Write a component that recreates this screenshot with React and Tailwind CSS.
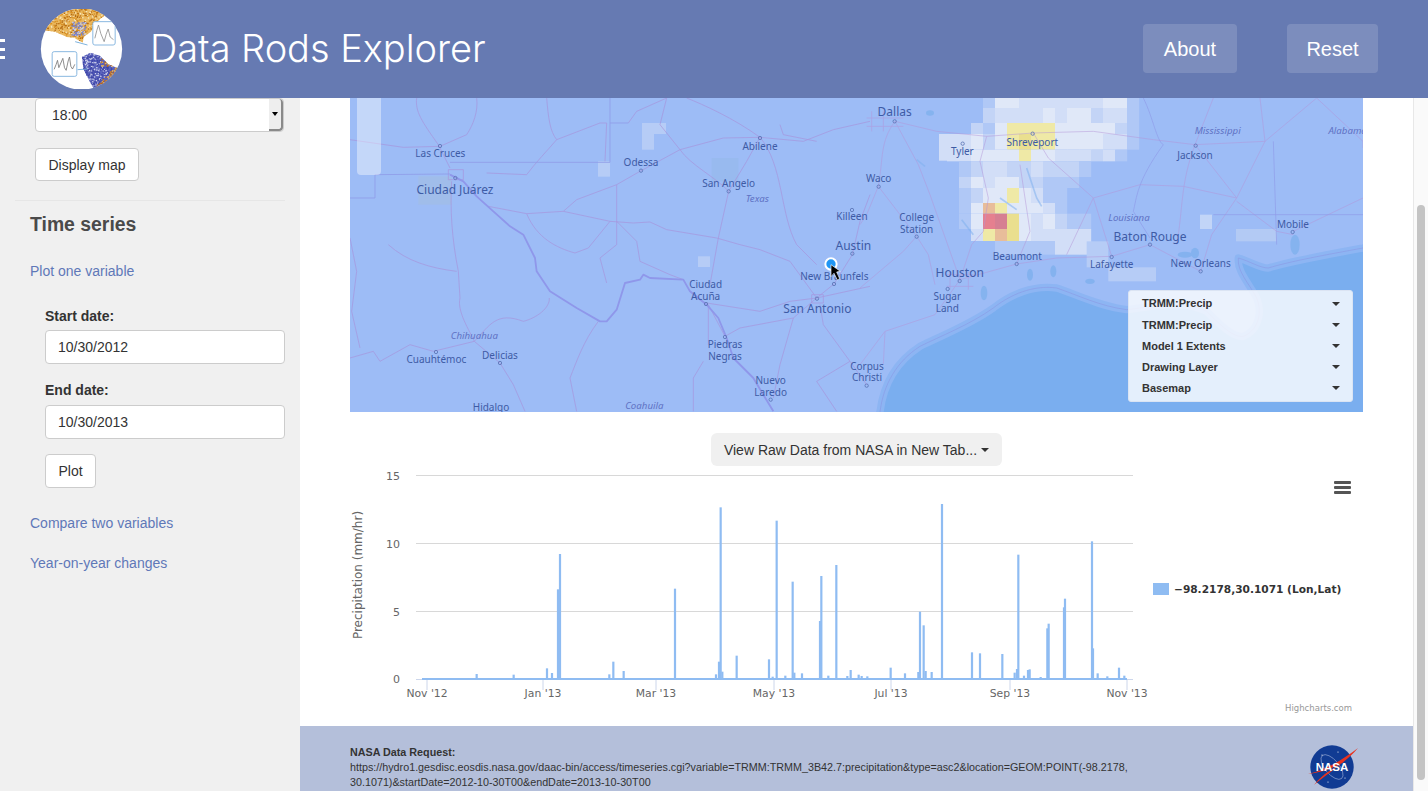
import React from "react";

// traced in 3x crop coordinates, the two groups below scale them back down
const westRoads = [
  "M200,0 C195,40 215,70 265,140 L300,210",
  "M380,0 C385,40 370,80 350,110 L270,145 L160,148 L0,125",
  "M590,0 C595,60 600,100 620,125 L750,75 L770,75 L765,190",
  "M620,125 C590,160 560,190 530,230 L410,225",
  "M835,75 L860,40 L950,0",
  "M950,0 L930,80 L990,155",
  "M990,155 C1020,200 1100,240 1136,280 L1105,420 L1080,560",
  "M1010,0 C1060,20 1150,60 1230,118 L1190,190 L1136,280",
  "M800,260 L800,370 L800,440 L750,480 L770,555",
  "M800,370 L860,430 L870,490 L960,530 L1000,545",
  "M415,325 L530,347 L640,340 L780,370 L850,375 L900,372 L950,395 L1100,420 L1170,440 L1230,455 L1320,490 L1400,600",
  "M640,340 L680,305 L720,290 L800,260 L870,220 L990,155 L1120,120 L1230,118 L1360,130 L1450,95 L1560,70",
  "M530,347 C560,420 620,450 675,465 L715,450 L780,370",
  "M305,250 C300,330 305,420 325,520 L330,600 C320,640 360,700 373,730",
  "M373,730 L450,795 L490,860 L525,940",
  "M0,780 L70,760 L90,790 L180,740 L250,760 L373,730",
  "M115,440 C170,490 240,510 320,520",
  "M373,730 C420,680 440,640 520,670 C560,660 600,630 598,600",
  "M745,670 C700,730 680,790 660,840 L680,940",
  "M1125,715 L1075,620 L1075,740",
  "M1060,790 L1030,840 L1030,940",
  "M1330,660 L1290,800 L1270,900",
  "M1400,600 L1330,660 L1170,690 L1125,715",
  "M1400,600 L1560,565",
  "M1410,620 L1420,680 L1500,790 L1550,860",
  "M1400,600 L1452,558 L1507,470 L1530,370 L1560,290",
  "M1070,615 L1230,640 L1320,610 L1400,600",
  "M1230,118 C1300,200 1290,350 1340,440 L1400,500",
  "M1290,80 L1300,110 L1400,130",
  "M0,420 L20,520 L5,640 L30,750",
  "M1500,790 L1400,850 L1460,940",
  "M1385,590 L1420,590 L1420,615 L1385,615 Z",
  "M295,215 L340,215 L340,245 L295,245 Z",
];

const eastRoads = [
  "M105,70 C60,130 70,180 55,265 L20,350 L0,380",
  "M105,70 L230,100 L380,115 L520,105 L700,100 L880,125 L1005,140 L1215,130 L1370,0",
  "M105,70 L175,200 L210,290 L300,545",
  "M55,265 L170,415 L130,460 L0,570",
  "M380,115 L360,190 L385,300 L370,400 L335,440 L300,545",
  "M520,105 L565,180 L700,300 L755,475",
  "M700,300 L620,470",
  "M300,545 L470,498 L590,480 L755,475 L870,440 L1022,520",
  "M300,545 L225,650 L75,700 L0,800",
  "M1005,140 C960,260 970,330 950,440",
  "M700,300 L840,260 L970,265 L1130,300 L1215,130",
  "M1130,300 L1055,410 L1022,520",
  "M1130,310 L1250,400 L1300,410",
  "M1300,400 L1509,300",
  "M1005,140 L1060,0",
  "M1005,140 L1130,300",
  "M1215,130 L1200,0",
  "M1370,0 L1509,130 L1509,150",
  "M470,498 L510,400 L480,200",
  "M170,415 L205,470 L225,560",
  "M75,700 L70,800",
  "M35,40 L35,100 M70,40 L70,100 M20,60 L130,60 M20,85 L130,85",
  "M260,530 L340,530 M260,565 L340,565 M270,520 L270,575 M325,520 L325,575",
];

const stateLines = [
  "M0,300 L75,300 L75,230 L300,228",
  "M300,193 L780,193 L780,0",
  "M780,75 L835,75",
];

const rioGrande =
  "M300,230 L340,250 L380,295 L430,340 L480,385 L520,410 L555,480 L560,520 L600,580 L680,630 L750,670 L770,670 L800,635 L825,555 L870,545 L880,530 L900,540 L1000,545 L1020,580 L1070,620 L1105,660 L1130,720 L1150,780 L1210,840 L1240,890 L1270,940";

// runs past the map edge so the coastal band only shows along the shore
const gulf =
  "M50,1000 L60,942 C70,860 110,790 180,745 C240,715 330,680 400,630 C450,590 520,560 590,570 C650,590 720,625 800,635 C860,630 960,600 1040,640 C1080,680 1120,720 1150,715 C1190,700 1210,650 1190,600 C1170,560 1130,520 1135,480 C1170,490 1200,510 1225,510 C1290,490 1400,470 1509,450 L1600,435 L1600,1000 Z";

const labels2 = [
  ["Las Cruces", 271, 177, 30],
  ["Odessa", 873, 205, 30],
  ["Abilene", 1230, 155, 30],
  ["San Angelo", 1136, 267, 30],
  ["Killeen", 1506, 367, 30],
  ["Austin", 1510, 452, 36],
  ["Ciudad Juárez", 315, 286, 36],
  ["New Braunfels", 1453, 546, 30],
  ["Ciudad", 1067, 570, 30],
  ["Acuña", 1067, 606, 30],
  ["San Antonio", 1402, 643, 36],
  ["Delicias", 450, 782, 30],
  ["Cuauhtémoc", 259, 796, 30],
  ["Piedras", 1125, 750, 30],
  ["Negras", 1125, 786, 30],
  ["Nuevo", 1262, 857, 30],
  ["Laredo", 1262, 893, 30],
  ["Hidalgo", 423, 940, 30],
  ["Corpus", 1551, 815, 30],
  ["Christi", 1551, 850, 30],
];

const italics2 = [
  ["Texas", 1222, 312],
  ["Chihuahua", 373, 722],
  ["Coahuila", 883, 934],
];

const labels3 = [
  ["Dallas", 104, 52, 36],
  ["Tyler", 307, 171, 30],
  ["Shreveport", 517, 143, 30],
  ["Waco", 56, 253, 30],
  ["College", 170, 370, 30],
  ["Station", 170, 405, 30],
  ["Beaumont", 472, 486, 30],
  ["Houston", 299, 533, 36],
  ["Sugar", 262, 606, 30],
  ["Land", 262, 642, 30],
  ["Lafayette", 755, 511, 30],
  ["Baton Rouge", 870, 425, 36],
  ["New Orleans", 1022, 507, 30],
  ["Jackson", 1005, 183, 30],
  ["Mobile", 1299, 390, 30],
];

const italics3 = [
  ["Louisiana", 807, 369],
  ["Mississippi", 1073, 107],
  ["Alabama", 1463, 107],
];

const dots2 = [[270, 144], [873, 218], [1230, 120], [1136, 280], [1506, 336], [1507, 467], [316, 240], [1452, 558], [1068, 618], [1125, 717], [1401, 602], [258, 762], [450, 795], [1262, 905]];
const dots3 = [[104, 70], [308, 137], [518, 107], [56, 266], [170, 416], [470, 498], [299, 549], [263, 573], [755, 477], [870, 440], [1022, 520], [1007, 143], [1298, 402], [20, 863]];

const heatCols = [-9, 27, 63, 99, 135, 171, 207, 243, 279, 315, 351, 387, 423, 459, 495, 531];
const heatRows = [
  [0, 30, "...fwwmmmmmmmwwf"],
  [30, 75, "...lmmmmwmwwlmmf"],
  [75, 108, "..lfwyyyywwwwwlf"],
  [108, 155, "mmwlwyYyywwwwmmf"],
  [155, 190, "mmwwwwywwmmmlmf."],
  [190, 237, ".flmmllmlllf...."],
  [237, 270, ".lwmwwllfff....."],
  [270, 315, ".flwwywmff......"],
  [315, 347, ".fwoywwwmf......"],
  [347, 393, ".fwrRYwmwlff...."],
  [393, 429, "..myoYwmmmmm...."],
  [429, 470, "....fffffmmm...."],
];
const heatFill = {
  w: "#e0e8f8",
  m: "#d2def7",
  l: "#c3d4f6",
  f: "#b0c8f6",
  y: "#efe9a6",
  Y: "#eadf8f",
  o: "#e8bd9a",
  r: "#e5808f",
  R: "#d67f92",
};
// the loose pale squares further out, still in crop coordinates of the east group
const looseCells = [
  [1020, 350, 36, 43, "#c2d5f7"],
  [1128, 393, 122, 37, "#b3caf4"],
  [745, 508, 143, 42, "#b6ccf6"],
  [680, 430, 65, 78, "#b6ccf6"],
  [237, 108, 60, 80, "#d2def7"],
];

// [x in px, top y in px] for the precipitation spikes
const spikes = [
  ...[[380, 612], [491, 614], [591, 595], [606, 609], [624, 358], [630, 252], [778, 613], [790, 575], [821, 603], [975, 356], [1098, 613], [1107, 575], [1112, 112], [1117, 605], [1160, 557]].map(([x, y]) => [350 + x / 3, 470 + y / 3]),
  ...[[27, 568], [38, 620], [50, 152], [76, 617], [98, 335], [103, 608], [126, 610], [180, 453], [184, 318], [205, 617], [229, 285], [262, 618], [272, 600], [296, 614], [305, 618], [322, 619], [392, 593], [435, 610], [475, 606], [480, 425], [491, 466], [497, 603], [515, 606], [546, 102], [636, 547], [660, 550], [727, 552], [764, 608], [771, 597], [775, 254], [792, 617], [804, 600], [809, 598], [842, 621], [862, 475], [866, 461], [912, 412], [915, 386], [996, 214], [999, 535], [1013, 610], [1042, 619], [1077, 593], [1093, 617]].map(([x, y]) => [760 + x / 3, 470 + y / 3]),
];

const xTicks = [
  ["Nov '12", 427],
  ["Jan '13", 543],
  ["Mar '13", 656],
  ["May '13", 774],
  ["Jul '13", 891],
  ["Sep '13", 1010],
  ["Nov '13", 1127],
];

const layers = ["TRMM:Precip", "TRMM:Precip", "Model 1 Extents", "Drawing Layer", "Basemap"];

// cheap repeatable scatter for the texture on the logo
const scatter = (n, seed, x0, y0, w, h) => {
  const out = [];
  let s = seed;
  for (let i = 0; i < n; i++) {
    s = (s * 16807) % 2147483647;
    const a = s % w;
    s = (s * 16807) % 2147483647;
    const b = s % h;
    out.push([x0 + a, y0 + b]);
  }
  return out;
};

const Logo = () => (
  <svg viewBox="120 24 248 240" className="w-[83px] h-[80px] shrink-0">
    <defs>
      <clipPath id="globe">
        <circle cx="244" cy="144" r="122" />
      </clipPath>
      <clipPath id="northAm">
        <path d="M130,88 L180,35 L240,20 L330,30 L295,58 L272,92 L250,108 L248,125 L222,110 L200,108 L165,92 Z" />
      </clipPath>
      <clipPath id="southAm">
        <path d="M245,168 L270,155 L300,165 L325,190 L360,205 L330,235 L285,270 L268,240 L250,205 Z" />
      </clipPath>
    </defs>
    <circle cx="244" cy="144" r="122" fill="#ffffff" />
    <g clipPath="url(#globe)">
      <g clipPath="url(#northAm)">
        <rect x="120" y="20" width="220" height="110" fill="#e9b75e" />
        {scatter(700, 77, 120, 20, 220, 110).map(([x, y], i) => (
          <rect key={i} x={x} y={y} width="4" height="4" fill={i % 5 === 0 ? "#f6e7bc" : i % 5 < 3 ? "#d98f22" : "#b56c12"} />
        ))}
        {scatter(90, 19, 214, 62, 42, 42).map(([x, y], i) => (
          <rect key={i} x={x} y={y} width="4" height="4" fill={i % 3 ? "#7a82c8" : "#c9cde9"} />
        ))}
      </g>
      <g clipPath="url(#southAm)">
        <rect x="240" y="150" width="125" height="125" fill="#5a62bc" />
        {scatter(800, 311, 240, 150, 125, 125).map(([x, y], i) => {
          const edge = x + y > 540 || (y < 195 && x > 300);
          return (
            <rect key={i} x={x} y={y} width="4" height="4" fill={edge ? (i % 2 ? "#b8661a" : "#e6b35a") : i % 3 ? "#3e45a8" : "#cfd2ec"} />
          );
        })}
      </g>
      <path d="M225,122 L262,132 M232,206 L262,204" stroke="#7fb3dd" strokeWidth="3" />
      <rect x="278" y="62" width="67" height="70" rx="6" fill="#ffffff" stroke="#8ab8e0" strokeWidth="3" />
      <polyline points="284,112 290,88 295,72 302,98 312,122 318,100 324,84 330,108 340,116" fill="none" stroke="#8f8f8f" strokeWidth="2.5" />
      <rect x="156" y="152" width="74" height="74" rx="6" fill="#ffffff" stroke="#8ab8e0" strokeWidth="3" />
      <polyline points="162,205 168,190 172,178 176,200 182,186 188,172 193,200 198,208 204,180 208,168 212,196 217,204 224,190" fill="none" stroke="#777777" strokeWidth="2.5" />
    </g>
  </svg>
);

const NasaLogo = () => (
  <svg viewBox="0 0 50 46" className="w-[50px] h-[46px]">
    <circle cx="24" cy="22" r="21.7" fill="#113b93" />
    <ellipse cx="24" cy="22" rx="15" ry="7" fill="none" stroke="#b9c6e6" strokeWidth="0.5" transform="rotate(50 24 22)" />
    <circle cx="14" cy="10" r="0.6" fill="#fff" />
    <circle cx="30" cy="7" r="0.6" fill="#fff" />
    <circle cx="37" cy="33" r="0.6" fill="#fff" />
    <circle cx="20" cy="37" r="0.6" fill="#fff" />
    <path d="M0,29 C18,25 34,15 50,3 C38,17 24,25 6,40 C16,27 26,24 36,17 C22,25 10,28 0,29 Z" fill="#e8321e" />
    <text x="24" y="26" textAnchor="middle" fontFamily="Liberation Sans, sans-serif" fontWeight="700" fontSize="11.5" fill="#ffffff">NASA</text>
  </svg>
);

const MapLabels = ({ items, italics, dots }) => (
  <>
    {dots.map(([x, y], i) => (
      <circle key={i} cx={x} cy={y} r="5" fill="none" stroke="#5a74b4" strokeWidth="2.5" />
    ))}
    {items.map(([t, x, y, s]) => (
      <text key={t + y} x={x} y={s > 30 ? y + 3 : y} textAnchor="middle" fontSize={s} fill="#3d5ba5">{t}</text>
    ))}
    {italics.map(([t, x, y]) => (
      <text key={t} x={x} y={y} textAnchor="middle" fontSize="29" fontStyle="italic" fill="#5f72c4">{t}</text>
    ))}
  </>
);

const MapPanel = () => (
  <div className="relative w-[1013px] h-[314px] bg-[#9dbcf6] overflow-hidden">
    <svg viewBox="350 98 1013 314" className="block w-[1013px] h-[314px] font-['Noto_Sans',sans-serif]">
      <g transform="translate(860 98) scale(0.33333)">
        <path d={gulf} fill="#7aaeef" stroke="#8db5f3" strokeWidth="22" strokeLinejoin="round" />
        <path d={gulf} fill="none" stroke="#8b9be6" strokeWidth="2.5" opacity="0.8" />
      </g>
      <g transform="translate(950 98) scale(0.33333)">
        {heatRows.map(([top, bottom, cells]) =>
          cells.split("").map((c, i) =>
            c === "." ? null : (
              <rect key={top + "-" + i} x={heatCols[i]} y={top} width="36.5" height={bottom - top} fill={heatFill[c]} />
            )
          )
        )}
      </g>
      <g transform="translate(860 98) scale(0.33333)">
        {looseCells.map(([x, y, w, h, fill]) => (
          <rect key={x} x={x} y={y} width={w} height={h} fill={fill} />
        ))}
        <g fill="none" stroke="#b494d8" strokeWidth="2.2" opacity="0.65">
          {eastRoads.map((d) => <path key={d} d={d} />)}
        </g>
        <path d="M1240,130 L1250,440 M1060,350 L1509,350 M850,0 C880,60 890,130 910,140 C830,250 830,300 820,340 L870,420" fill="none" stroke="#8f9ce8" strokeWidth="2.5" opacity="0.8" />
        <path d="M500,210 L530,300 L545,325 M420,300 L470,335 M305,365 L340,410 M170,185 L195,205" fill="none" stroke="#7fb0ee" strokeWidth="5" opacity="0.55" />
        <g fill="#7fb0ee" opacity="0.8">
          <ellipse cx="975" cy="470" rx="22" ry="9" />
          <ellipse cx="1005" cy="465" rx="12" ry="16" />
          <ellipse cx="1305" cy="440" rx="14" ry="30" />
          <ellipse cx="510" cy="530" rx="9" ry="18" />
          <ellipse cx="580" cy="520" rx="9" ry="18" />
          <ellipse cx="690" cy="550" rx="14" ry="8" />
          <ellipse cx="372" cy="585" rx="10" ry="22" />
          <ellipse cx="210" cy="45" rx="12" ry="8" />
        </g>
        <MapLabels items={labels3} italics={italics3} dots={dots3} />
      </g>
      <g transform="translate(350 98) scale(0.33333)">
        <rect x="876" y="75" width="72" height="33" fill="#b6ccf6" />
        <rect x="876" y="108" width="36" height="47" fill="#b6ccf6" />
        <rect x="744" y="190" width="36" height="46" fill="#b6ccf6" />
        <rect x="1044" y="475" width="36" height="32" fill="#b6ccf6" />
        <rect x="1085" y="180" width="80" height="70" fill="#93b9e6" opacity="0.45" />
        <rect x="205" y="235" width="100" height="85" fill="#a5bdd9" opacity="0.4" />
        <g fill="none" stroke="#a98fd8" strokeWidth="2.2" opacity="0.8">
          {westRoads.map((d) => <path key={d} d={d} />)}
        </g>
        <g fill="none" stroke="#8f9ce8" strokeWidth="2.5">
          {stateLines.map((d) => <path key={d} d={d} />)}
        </g>
        <path d={rioGrande} fill="none" stroke="#8f97ea" strokeWidth="5.5" strokeLinejoin="round" />
        <MapLabels items={labels2} italics={italics2} dots={dots2} />
        <circle cx="1443" cy="498" r="17" fill="#2196f3" stroke="#ffffff" strokeWidth="6" />
        <path d="M1443,500 L1443,536 L1452,526 L1462,546 L1469,542 L1460,522 L1471,520 Z" fill="#000000" stroke="#ffffff" strokeWidth="2" />
      </g>
    </svg>
    {/* zoom control, washed out */}
    <div className="absolute left-[7px] top-0 w-[24px] h-[77px] bg-white/40 rounded-b" />
    {/* layer switcher */}
    <div className="absolute left-[778px] top-[192px] w-[225px] h-[112px] py-[2px] pl-[13px] pr-[12px] bg-white/80 border border-[#dbe4f3] rounded-[3px] flex flex-col">
      {layers.map((name, i) => (
        <div key={i} className="h-[21.6px] flex items-center justify-between text-[11px] font-bold text-[#333333]">
          <span>{name}</span>
          <span className="w-0 h-0 border-x-[4.5px] border-x-transparent border-t-[4px] border-t-[#333333]" />
        </div>
      ))}
    </div>
  </div>
);

const Chart = () => (
  <svg viewBox="350 466 1013 260" className="block w-[1013px] h-[260px] font-['DejaVu_Sans',sans-serif]">
    {[475.5, 543.5, 611.5].map((y) => (
      <line key={y} x1="416" x2="1133" y1={y} y2={y} stroke="#d8d8d8" />
    ))}
    {[["15", 480], ["10", 548], ["5", 616], ["0", 683]].map(([t, y]) => (
      <text key={t} x="400" y={y} textAnchor="end" fontSize="11" fill="#666666">{t}</text>
    ))}
    <text transform="translate(362 575) rotate(-90)" textAnchor="middle" fontSize="12" fill="#666666">Precipitation (mm/hr)</text>
    {xTicks.map(([t, x]) => (
      <g key={t}>
        <line x1={x} x2={x} y1="679" y2="690" stroke="#ccd6eb" />
        <text x={x} y="697" textAnchor="middle" fontSize="10.8" fill="#666666">{t}</text>
      </g>
    ))}
    <line x1="416" x2="1133" y1="679.5" y2="679.5" stroke="#ccd6eb" />
    <rect x="422" y="678" width="705" height="2" fill="#8fbcf2" />
    {spikes.map(([x, y]) => (
      <rect key={x} x={x - 1.1} y={y} width="2.2" height={679.5 - y} fill="#8fbcf2" />
    ))}
    <rect x="1153" y="583" width="16" height="12" fill="#8fbcf2" />
    <text x="1174" y="593" fontSize="10.6" fontWeight="700" fill="#333333">−98.2178,30.1071 (Lon,Lat)</text>
    <g fill="#555555">
      <rect x="1334" y="481" width="17" height="3" rx="1" />
      <rect x="1334" y="486" width="17" height="3" rx="1" />
      <rect x="1334" y="491" width="17" height="3" rx="1" />
    </g>
    <text x="1352" y="711" textAnchor="end" fontSize="8.5" fill="#999999">Highcharts.com</text>
  </svg>
);

const Sidebar = () => (
  <aside className="w-[300px] shrink-0 bg-[#f0f0f0] text-sm text-[#333333]">
    <div className="ml-[35px] w-[249px] h-[34px] bg-white border border-[#cccccc] rounded flex items-center justify-between">
      <span className="pl-4">18:00</span>
      <span className="w-[14px] h-[32px] bg-[#eeeeee] border-r-2 border-b-2 border-[#8a8a8a] rounded-r flex items-center justify-center">
        <span className="w-0 h-0 border-x-[3px] border-x-transparent border-t-[4px] border-t-black" />
      </span>
    </div>
    <button className="block ml-[35px] mt-4 h-[33px] w-[104px] bg-white border border-[#cccccc] rounded">Display map</button>
    <hr className="mx-[15px] mt-[19px] border-[#e6e6e6]" />
    <h3 className="ml-[30px] mt-[11px] text-[19.4px] leading-[24px] font-bold text-[#4a4a4a]">Time series</h3>
    <a className="block ml-[30px] mt-[25px] leading-5 text-[#5f78b8]">Plot one variable</a>
    <label className="block ml-[45px] mt-[25px] leading-5 font-bold">Start date:</label>
    <div className="ml-[45px] mt-[4px] w-[240px] h-[34px] px-3 bg-white border border-[#cccccc] rounded flex items-center">10/30/2012</div>
    <label className="block ml-[45px] mt-[16px] leading-5 font-bold">End date:</label>
    <div className="ml-[45px] mt-[5px] w-[240px] h-[34px] px-3 bg-white border border-[#cccccc] rounded flex items-center">10/30/2013</div>
    <button className="block ml-[45px] mt-[15px] h-[34px] w-[51px] bg-white border border-[#cccccc] rounded">Plot</button>
    <a className="block ml-[30px] mt-[25px] leading-5 text-[#5f78b8]">Compare two variables</a>
    <a className="block ml-[30px] mt-[20px] leading-5 text-[#5f78b8]">Year-on-year changes</a>
  </aside>
);

export default function App() {
  return (
    <div className="h-[791px] w-[1428px] overflow-hidden flex flex-col font-['Liberation_Sans',Arial,sans-serif] bg-white">
      <header className="h-[98px] shrink-0 bg-[#667ab2] flex items-center text-white">
        <div className="w-[5px] flex flex-col gap-[5.5px]">
          <span className="h-[3px] bg-white" />
          <span className="h-[3px] bg-white" />
          <span className="h-[3px] bg-white" />
        </div>
        <div className="ml-[35px]">
          <Logo />
        </div>
        <h1 className="ml-[27px] mb-[2px] text-[38px] font-light font-['Inter',sans-serif] tracking-[-0.05px]">Data Rods Explorer</h1>
        <div className="ml-auto mr-[50px] mb-[1px] flex gap-[50px] text-[20px]">
          <button className="w-[94px] h-[49px] bg-white/15 rounded">About</button>
          <button className="w-[91px] h-[49px] bg-white/15 rounded">Reset</button>
        </div>
      </header>
      <div className="flex-1 flex min-h-0">
        <Sidebar />
        <main className="w-[1113px] shrink-0 flex flex-col">
          <div className="px-[50px]">
            <MapPanel />
            <div className="flex justify-center mt-[21px]">
              <button className="h-[33px] w-[291px] bg-[#f0f0f0] rounded-md text-sm text-[#333333] flex items-center justify-center gap-1">
                View Raw Data from NASA in New Tab...
                <span className="w-0 h-0 border-x-4 border-x-transparent border-t-4 border-t-[#333333]" />
              </button>
            </div>
            <Chart />
          </div>
          <footer className="flex-1 bg-[#b4bfda] pl-[50px] pr-[5px] pt-[19px] flex justify-between text-[10.75px] leading-[15px] text-[#333333]">
            <div>
              <div className="font-bold">NASA Data Request:</div>
              <div>
                https://hydro1.gesdisc.eosdis.nasa.gov/daac-bin/access/timeseries.cgi?variable=TRMM:TRMM_3B42.7:precipitation&amp;type=asc2&amp;location=GEOM:POINT(-98.2178,
                <br />
                30.1071)&amp;startDate=2012-10-30T00&amp;endDate=2013-10-30T00
              </div>
            </div>
            <div className="mr-[50px]">
              <NasaLogo />
            </div>
          </footer>
        </main>
        <div className="w-[15px] shrink-0 bg-[#fafafa] border-l border-[#e8e8e8] pt-[107px] pl-[3px]">
          <div className="w-[8px] h-[575px] bg-[#c4c4c4] rounded-full" />
        </div>
      </div>
    </div>
  );
}
